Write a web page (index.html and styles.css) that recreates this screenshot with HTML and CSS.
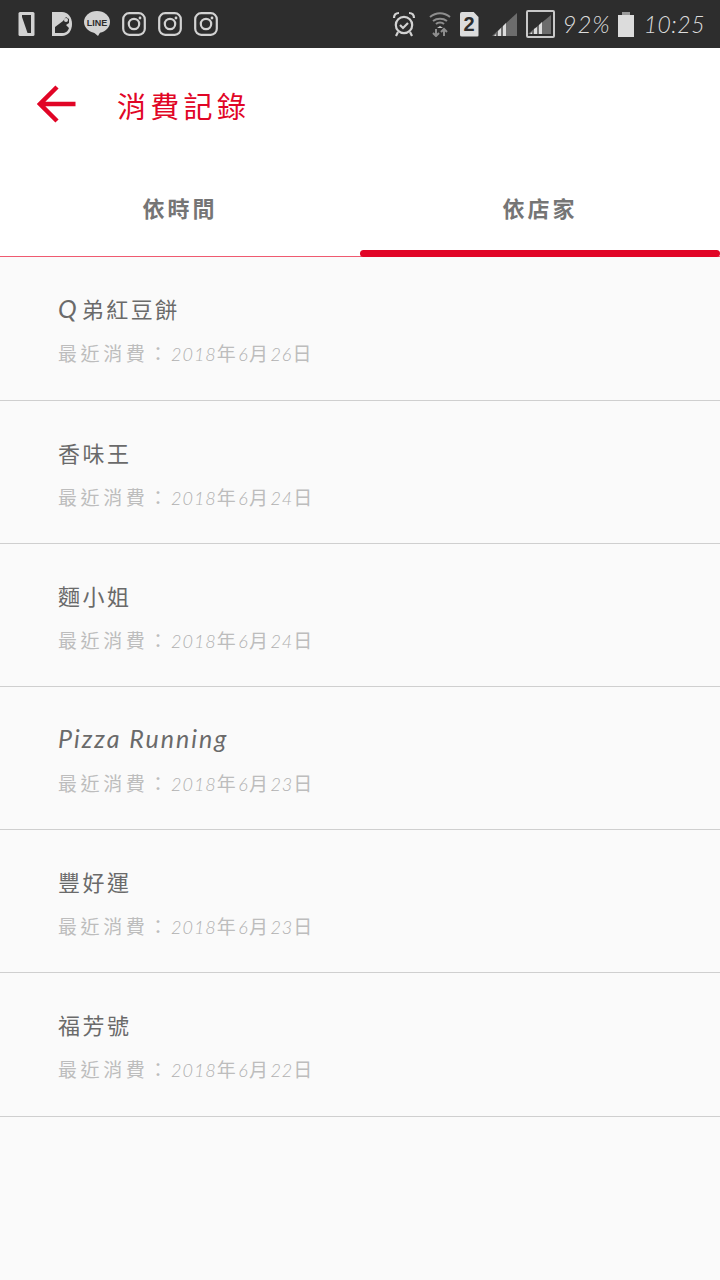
FILE: index.html
```html
<!DOCTYPE html>
<html lang="zh-Hant">
  <head>
    <meta charset="UTF-8">
    <title>消費記錄</title>
    <link rel="stylesheet" href="styles.css">
  </head>
  <body>
    <div class="status-bar">
      <div class="status-left">
        <svg class="icon" width="18" height="26" viewBox="0 0 18 26">
          <rect x="0.500" y="1" width="16" height="24" rx="1.500" fill="#d2d2d2"/>
          <path d="M4 4h9v18H9.500L4 6z" fill="#2d2d2d"/>
        </svg>
        <svg class="icon" width="22" height="26" viewBox="0 0 22 26">
          <path d="M1 1h10c6 0 10 5 10 12s-4 12-10 12H1z" fill="#d2d2d2"/>
          <path d="M4 16l8-6 3-4 3 2 0 4-3 2 3 3c-1 3-3 5-7 5H4z" fill="#2d2d2d"/>
          <circle cx="15" cy="9" r="2" fill="#d2d2d2"/>
        </svg>
        <svg class="icon" width="28" height="26" viewBox="0 0 28 26">
          <ellipse cx="14" cy="11" rx="13" ry="11" fill="#d2d2d2"/>
          <path d="M9 20l6 5 3-5z" fill="#d2d2d2"/>
          <text x="14" y="14.500" class="line-mark">LINE</text>
        </svg>
        <svg class="icon" width="24" height="24" viewBox="0 0 24 24">
          <rect x="1.200" y="1.200" width="21.600" height="21.600" rx="6" class="outline"/>
          <circle cx="12" cy="12" r="5.200" class="outline"/>
          <circle cx="18" cy="6" r="1.400" fill="#d2d2d2"/>
        </svg>
        <svg class="icon" width="24" height="24" viewBox="0 0 24 24">
          <rect x="1.200" y="1.200" width="21.600" height="21.600" rx="6" class="outline"/>
          <circle cx="12" cy="12" r="5.200" class="outline"/>
          <circle cx="18" cy="6" r="1.400" fill="#d2d2d2"/>
        </svg>
        <svg class="icon" width="24" height="24" viewBox="0 0 24 24">
          <rect x="1.200" y="1.200" width="21.600" height="21.600" rx="6" class="outline"/>
          <circle cx="12" cy="12" r="5.200" class="outline"/>
          <circle cx="18" cy="6" r="1.400" fill="#d2d2d2"/>
        </svg>
      </div>
      <div class="status-right">
        <svg class="icon alarm" width="24" height="26" viewBox="0 0 24 26">
          <circle cx="12" cy="14" r="8.200" class="outline"/>
          <path d="M8 14l3 3 5-5" class="outline"/>
          <path d="M2 7c0-3 2-5 5-5M22 7c0-3-2-5-5-5M6 21l-2 4M18 21l2 4" class="outline"/>
        </svg>
        <svg class="icon wifi" width="22" height="26" viewBox="0 0 22 26">
          <path d="M1 6c6-5 14-5 20 0M4 10c4-3 10-3 14 0M7 13c2-2 6-2 8 0" fill="none" stroke="#8e8e8e" stroke-width="2"/>
          <path d="M8 17l3-2 3 2z" fill="#c8c8c8"/>
          <path d="M7 18v7M4 22l3 3 3-3M15 25v-7M12 21l3-3 3 3" fill="none" stroke="#8e8e8e" stroke-width="2"/>
        </svg>
        <div class="sim">2</div>
        <svg class="icon signal" width="25" height="26" viewBox="0 0 25 26">
          <path d="M0 25L25 2v23z" fill="#6c6c6c"/>
          <path d="M2 25l2-2v2zM6 25v-5l3-3v8zM11 25V15l3-3v13z" fill="#dcdcdc"/>
        </svg>
        <div class="signal-box">
          <svg width="24" height="20" viewBox="0 0 24 20">
            <path d="M0 19L23 0v19z" fill="#6c6c6c"/>
            <path d="M2 19l2-2v2zM6 19v-5l3-2v7zM11 19V10l3-3v12z" fill="#dcdcdc"/>
          </svg>
        </div>
        <span class="status-text percent">92%</span>
        <div class="battery"></div>
        <span class="status-text clock">10:25</span>
      </div>
    </div>

    <div class="app-bar">
      <svg class="back" width="40" height="38" viewBox="0 0 40 38">
        <path d="M38.500 19H4M20 2L3 19l17 17" fill="none" stroke="#e10526" stroke-width="4.500"/>
      </svg>
      <h1 class="page-title">消費記錄</h1>
    </div>

    <div class="tabs">
      <div class="tab">依時間</div>
      <div class="tab tab-active">依店家</div>
    </div>

    <div class="shop-list">
      <div class="shop-row">
        <div class="shop-name"><span class="latin latin-q">Q</span>弟紅豆餅</div>
        <div class="shop-date"><span class="date-label">最近消費：</span><span class="num">2018</span>年<span class="num">6</span>月<span class="num">26</span>日</div>
      </div>
      <div class="shop-row">
        <div class="shop-name">香味王</div>
        <div class="shop-date"><span class="date-label">最近消費：</span><span class="num">2018</span>年<span class="num">6</span>月<span class="num">24</span>日</div>
      </div>
      <div class="shop-row">
        <div class="shop-name">麵小姐</div>
        <div class="shop-date"><span class="date-label">最近消費：</span><span class="num">2018</span>年<span class="num">6</span>月<span class="num">24</span>日</div>
      </div>
      <div class="shop-row">
        <div class="shop-name"><span class="latin">Pizza Running</span></div>
        <div class="shop-date"><span class="date-label">最近消費：</span><span class="num">2018</span>年<span class="num">6</span>月<span class="num">23</span>日</div>
      </div>
      <div class="shop-row">
        <div class="shop-name">豐好運</div>
        <div class="shop-date"><span class="date-label">最近消費：</span><span class="num">2018</span>年<span class="num">6</span>月<span class="num">23</span>日</div>
      </div>
      <div class="shop-row">
        <div class="shop-name">福芳號</div>
        <div class="shop-date"><span class="date-label">最近消費：</span><span class="num">2018</span>年<span class="num">6</span>月<span class="num">22</span>日</div>
      </div>
    </div>
  </body>
</html>
```

FILE: styles.css
```css
* {
  box-sizing: border-box;
}

html, body {
  margin: 0;
  height: 100%;
}

body {
  width: 720px;
  min-height: 1280px;
  background: #fafafa;
  font-family: "Noto Sans CJK TC", "Noto Sans", sans-serif;
  overflow: hidden;
}

/* status bar */
.status-bar {
  height: 48px;
  background: #2d2d2d;
  display: flex;
  justify-content: space-between;
  align-items: center;
  padding: 0 15px 0 18px;
  color: #dcdcdc;
}

.status-left, .status-right {
  display: flex;
  align-items: center;
}

.status-left {
  gap: 12px;
}

.status-left .icon:nth-child(2) { margin-left: 3px; margin-right: -1px; }
.status-left .icon:nth-child(3) { margin-left: -1px; margin-right: -1px; }

.icon {
  display: block;
}

.line-mark {
  font-family: "Liberation Sans", sans-serif;
  font-size: 9px;
  font-weight: 700;
  fill: #2d2d2d;
  text-anchor: middle;
}

.outline {
  fill: none;
  stroke: #d2d2d2;
  stroke-width: 2.200;
}

.wifi { margin-left: 13px; }

.sim {
  width: 19px;
  height: 25px;
  margin-left: 9px;
  background: #dcdcdc;
  border-radius: 2px;
  clip-path: polygon(0 0, 72% 0, 100% 22%, 100% 100%, 0 100%);
  color: #2d2d2d;
  font-family: "Liberation Sans", sans-serif;
  font-size: 20px;
  font-weight: 700;
  line-height: 25px;
  text-align: center;
}

.signal { margin-left: 13px; }

.signal-box {
  width: 29px;
  height: 28px;
  margin-left: 9px;
  border: 2px solid #c8c8c8;
  border-radius: 2px;
  display: flex;
  align-items: flex-end;
  justify-content: center;
  padding-bottom: 1px;
}

.status-text {
  font-family: "Lato", sans-serif;
  font-style: italic;
  font-weight: 300;
  line-height: 1;
}

.percent {
  margin-left: 8px;
  font-size: 24px;
  letter-spacing: 1px;
}

.battery {
  position: relative;
  width: 16px;
  height: 22px;
  margin-left: 7px;
  margin-top: 3px;
  background: #dcdcdc;
}

.battery::before {
  content: "";
  position: absolute;
  top: -3px;
  left: 4px;
  width: 8px;
  height: 3px;
  background: #9a9a9a;
}

.clock {
  margin-left: 10px;
  font-size: 23px;
  letter-spacing: 0.500px;
}

/* header */
.app-bar {
  height: 114px;
  background: #fff;
  display: flex;
  align-items: flex-start;
  padding: 37px 0 0 37px;
}

.back {
  display: block;
  flex: none;
}

.page-title {
  margin: 0 0 0 40px;
  color: #e10526;
  font-size: 29px;
  font-weight: 400;
  letter-spacing: 4.300px;
  line-height: 40px;
}

/* tabs */
.tabs {
  height: 95px;
  background: #fff;
  display: flex;
  border-bottom: 1px solid #ef5a70;
}

.tab {
  flex: 1;
  position: relative;
  padding-top: 29px;
  color: #757575;
  font-size: 22px;
  font-weight: 700;
  letter-spacing: 3px;
  line-height: 32px;
  text-align: center;
}

.tab-active::after {
  content: "";
  position: absolute;
  left: 0;
  right: 0;
  bottom: -1px;
  height: 7px;
  border-radius: 4px;
  background: #e10526;
}

/* list */
.shop-list {
  padding-top: 0.450px;
}

.shop-row {
  height: 143.200px;
  padding: 33px 0 0 58px;
  border-bottom: 1px solid #cfcfcf;
}

.shop-name {
  height: 36px;
  color: #6a6a6a;
  font-size: 22px;
  letter-spacing: 2.500px;
  line-height: 36px;
}

.latin {
  font-family: "Lato", sans-serif;
  font-size: 25px;
  font-style: italic;
  letter-spacing: 2px;
}

.latin-q {
  margin-right: 3px;
}

.shop-date {
  height: 28px;
  margin-top: 13px;
  color: #bdbdbd;
  font-size: 19px;
  letter-spacing: 2.500px;
  line-height: 28px;
}

.date-label {
  letter-spacing: 3.600px;
}

.num {
  color: #b0b0b0;
  font-family: "Lato", sans-serif;
  font-size: 18px;
  font-style: italic;
  font-weight: 300;
  letter-spacing: 1px;
}
```
